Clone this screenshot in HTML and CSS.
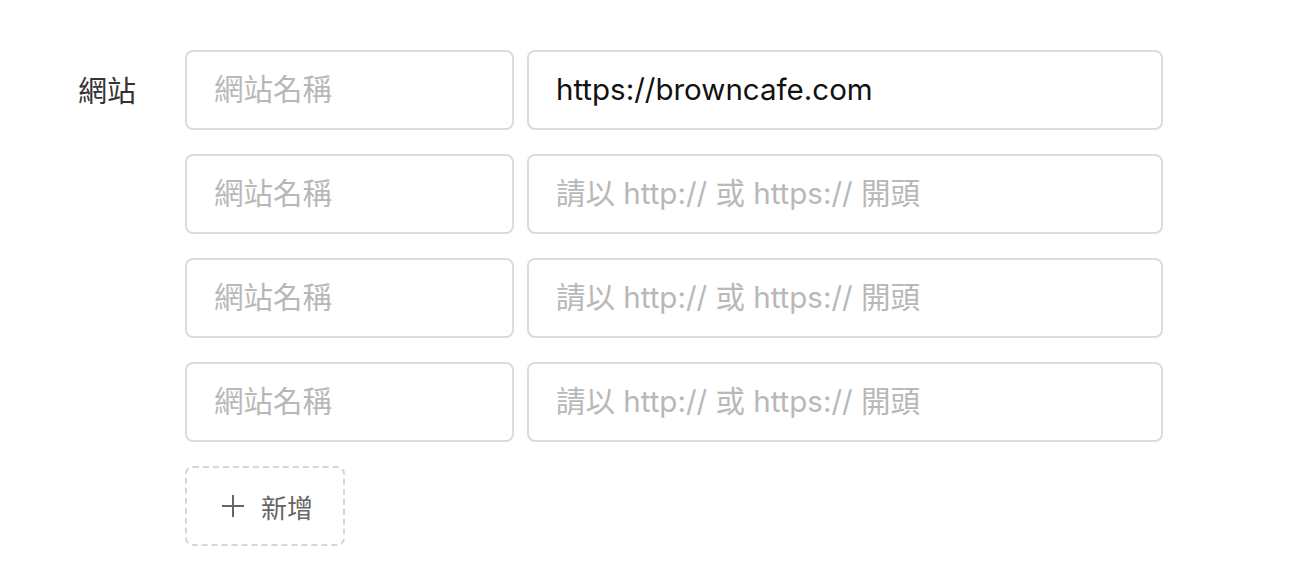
FILE: index.html
```html
<!DOCTYPE html>
<html lang="zh-Hant">
<head>
    <meta charset="UTF-8">
    <meta name="viewport" content="width=device-width, initial-scale=1.0">
    <title>網站設定</title>
    <link rel="stylesheet" href="styles.css">
</head>
<body>
    <div class="form-row">
        <label class="form-label">網站</label>

        <div class="site-fields">
            <div class="site-row">
                <input class="field field-name" type="text" placeholder="網站名稱">
                <input class="field field-url" type="text" placeholder="請以 http:// 或 https:// 開頭" value="https://browncafe.com">
            </div>
            <div class="site-row">
                <input class="field field-name" type="text" placeholder="網站名稱">
                <input class="field field-url" type="text" placeholder="請以 http:// 或 https:// 開頭">
            </div>
            <div class="site-row">
                <input class="field field-name" type="text" placeholder="網站名稱">
                <input class="field field-url" type="text" placeholder="請以 http:// 或 https:// 開頭">
            </div>
            <div class="site-row">
                <input class="field field-name" type="text" placeholder="網站名稱">
                <input class="field field-url" type="text" placeholder="請以 http:// 或 https:// 開頭">
            </div>

            <button class="add-button" type="button">
                <svg class="add-icon" width="24" height="24" viewBox="0 0 24 24">
                    <path d="M12 1v22M1 12h22" stroke="currentColor" stroke-width="2" fill="none"/>
                </svg>
                <span>新增</span>
            </button>
        </div>
    </div>
</body>
</html>
```

FILE: styles.css
```css
* {
    margin: 0;
    padding: 0;
    box-sizing: border-box;
}

body {
    font-family: Inter, "Noto Sans CJK TC", sans-serif;
    background: #fff;
    color: #333;
    padding: 50px 0 0 78px;
}

.form-row {
    display: flex;
    align-items: flex-start;
}

.form-label {
    width: 107px;
    height: 78px;
    display: flex;
    align-items: center;
    font-size: 29px;
    color: #333;
}

.site-fields {
    display: flex;
    flex-direction: column;
    gap: 24px;
}

.site-row {
    display: flex;
    gap: 13px;
}

.field {
    height: 80px;
    border: 2px solid #dcdcdc;
    border-radius: 8px;
    padding: 0 27px 2px;
    font-family: inherit;
    font-size: 29.5px;
    color: #111;
    background: #fff;
    outline: none;
}

.field::placeholder {
    color: #b8b8b8;
}

.field-name {
    width: 329px;
}

.field-url {
    width: 636px;
}

.add-button {
    width: 160px;
    height: 80px;
    border: 2px dashed #d6d6d6;
    border-radius: 8px;
    background: #fff;
    color: #666;
    font-family: inherit;
    font-size: 26px;
    display: flex;
    align-items: center;
    justify-content: center;
    gap: 16px;
    padding-left: 4px;
    cursor: pointer;
}

.add-icon {
    display: block;
}
```
